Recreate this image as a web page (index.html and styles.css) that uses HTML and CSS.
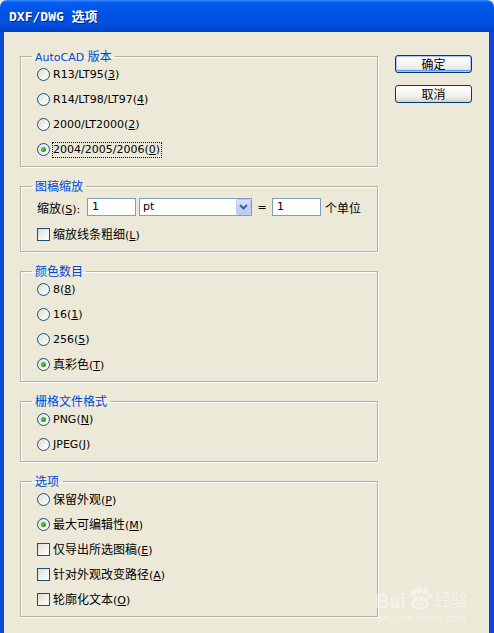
FILE: index.html
```html
<!DOCTYPE html>
<html lang="zh-CN">
<head>
<meta charset="utf-8">
<title>DXF/DWG 选项</title>
<link rel="stylesheet" href="styles.css">
</head>
<body>
<div class="window">
  <div class="titlebar"><span class="title">DXF/DWG 选项</span></div>
  <div class="frame">
    <div class="client">
      <div class="groups">
        <fieldset class="group">
          <legend>AutoCAD <span class="zh">版本</span></legend>
          <div class="row"><span class="radio"></span><span class="lbl">R13/LT95(<u>3</u>)</span></div>
          <div class="row"><span class="radio"></span><span class="lbl">R14/LT98/LT97(<u>4</u>)</span></div>
          <div class="row"><span class="radio"></span><span class="lbl">2000/LT2000(<u>2</u>)</span></div>
          <div class="row"><span class="radio on"></span><span class="lbl focus">2004/2005/2006(<u>0</u>)</span></div>
        </fieldset>
        <fieldset class="group scale">
          <legend class="zh">图稿缩放</legend>
          <div class="row tall">
            <span class="fieldlbl"><span class="zh">缩放</span>(<u>S</u>):</span>
            <span class="input w1">1</span>
            <span class="select"><span class="selval">pt</span><span class="dropbtn"><svg width="9" height="6" viewBox="0 0 9 6"><path d="M1 1 L4.5 4.5 L8 1" fill="none" stroke="#4D6185" stroke-width="2"/></svg></span></span>
            <span class="eq">=</span>
            <span class="input w2">1</span>
            <span class="unit zh">个单位</span>
          </div>
          <div class="row"><span class="check"></span><span class="lbl"><span class="zh">缩放线条粗细</span>(<u>L</u>)</span></div>
        </fieldset>
        <fieldset class="group">
          <legend class="zh">颜色数目</legend>
          <div class="row"><span class="radio"></span><span class="lbl">8(<u>8</u>)</span></div>
          <div class="row"><span class="radio"></span><span class="lbl">16(<u>1</u>)</span></div>
          <div class="row"><span class="radio"></span><span class="lbl">256(<u>5</u>)</span></div>
          <div class="row"><span class="radio on"></span><span class="lbl"><span class="zh">真彩色</span>(<u>T</u>)</span></div>
        </fieldset>
        <fieldset class="group">
          <legend class="zh">栅格文件格式</legend>
          <div class="row"><span class="radio on"></span><span class="lbl">PNG(<u>N</u>)</span></div>
          <div class="row"><span class="radio"></span><span class="lbl">JPEG(<u>J</u>)</span></div>
        </fieldset>
        <fieldset class="group">
          <legend class="zh">选项</legend>
          <div class="row"><span class="radio"></span><span class="lbl"><span class="zh">保留外观</span>(<u>P</u>)</span></div>
          <div class="row"><span class="radio on"></span><span class="lbl"><span class="zh">最大可编辑性</span>(<u>M</u>)</span></div>
          <div class="row"><span class="check"></span><span class="lbl"><span class="zh">仅导出所选图稿</span>(<u>E</u>)</span></div>
          <div class="row"><span class="check"></span><span class="lbl"><span class="zh">针对外观改变路径</span>(<u>A</u>)</span></div>
          <div class="row"><span class="check"></span><span class="lbl"><span class="zh">轮廓化文本</span>(<u>O</u>)</span></div>
        </fieldset>
      </div>
      <div class="buttons">
        <button class="btn default">确定</button>
        <button class="btn">取消</button>
      </div>
    </div>
  </div>
  <div class="watermark">
    <div class="wm-top">
      <span class="wm-bai">Bai</span>
      <svg class="wm-paw" width="28" height="24" viewBox="0 0 28 24">
        <ellipse cx="7" cy="6" rx="3" ry="3.5" fill="#fff"/>
        <ellipse cx="13" cy="3.5" rx="3" ry="3.5" fill="#fff"/>
        <ellipse cx="19.5" cy="4" rx="3" ry="3.5" fill="#fff"/>
        <ellipse cx="24" cy="9" rx="2.6" ry="3" fill="#fff"/>
        <ellipse cx="14" cy="16" rx="9" ry="7" fill="#fff"/>
        <text x="14" y="20" font-size="10" text-anchor="middle" fill="#ECE9D8" font-family="Liberation Sans, sans-serif" font-weight="bold">du</text>
      </svg>
      <span class="wm-jy">经验</span>
    </div>
    <div class="wm-url">jingyan.baidu.com</div>
  </div>
</div>
</body>
</html>
```
FILE: styles.css
```css
html, body {
  margin: 0;
  padding: 0;
  background: #ECE9D8;
}
.window {
  position: relative;
  width: 494px;
  height: 633px;
  display: flex;
  flex-direction: column;
  overflow: hidden;
  font-family: "DejaVu Sans", "Noto Sans CJK SC", sans-serif;
  font-size: 11px;
  color: #000;
}
.zh {
  font-family: "Noto Sans CJK SC", sans-serif;
  font-size: 12px;
}
.titlebar {
  height: 32px;
  flex: none;
  border-radius: 7px 7px 0 0;
  background: linear-gradient(#3B8FFF 0, #0A62F2 2px, #0058EE 6px, #0054E3 14px, #0050DF 24px, #0047D2 29px, #003CC0 32px);
  display: flex;
  align-items: center;
  padding-left: 9px;
  padding-bottom: 1px;
  box-sizing: border-box;
}
.title {
  color: #fff;
  font-family: "DejaVu Sans Mono", "Noto Sans CJK SC", monospace;
  font-weight: bold;
  font-size: 13px;
  text-shadow: 1px 1px 0 #0A1E8A;
}
.frame {
  flex: 1;
  border-left: 4px solid #0A4BDA;
  border-right: 5px solid #0A46D6;
  background: #ECE9D8;
}
.client {
  display: flex;
  align-items: flex-start;
  padding: 18px 0 0 16px;
}
.groups {
  width: 358px;
  display: flex;
  flex-direction: column;
  gap: 13px;
}
.group {
  margin: 0;
  padding: 0 0 4px 16px;
  border: 1px solid #B5B2A3;
  box-shadow: 1px 1px 0 #fff, inset 1px 1px 0 #fff;
  min-width: 0;
}
.group legend {
  color: #0046D5;
  height: 12px;
  line-height: 12px;
  padding: 0 3px;
  margin-left: -5px;
  overflow: visible;
}
.group legend .zh,
.group legend.zh {
  line-height: 12px;
}
.row {
  display: flex;
  align-items: center;
  height: 25px;
}
.row.tall {
  height: 30px;
}
.radio {
  width: 13px;
  height: 13px;
  box-sizing: border-box;
  border: 1px solid #1C5180;
  border-radius: 50%;
  background: linear-gradient(135deg, #DCDAD3 0%, #F4F3EE 60%, #fff 100%);
  margin-right: 3px;
  display: flex;
  align-items: center;
  justify-content: center;
  flex: none;
}
.radio.on::after {
  content: "";
  width: 5px;
  height: 5px;
  border-radius: 50%;
  background: radial-gradient(circle at 40% 35%, #5CD05C 0, #21A121 60%, #1A8A1A 100%);
}
.check {
  width: 13px;
  height: 13px;
  box-sizing: border-box;
  border: 1px solid #1C5180;
  background: linear-gradient(135deg, #DCDAD3 0%, #F4F3EE 60%, #fff 100%);
  margin-right: 3px;
  flex: none;
}
.lbl {
  line-height: 14px;
  padding: 0 1px 0 0;
}
.focus {
  outline: 1px dotted #000;
  outline-offset: 0;
}
u {
  text-decoration: underline;
  text-underline-offset: 1px;
}
.fieldlbl {
  width: 50px;
  flex: none;
}
.input {
  height: 18px;
  box-sizing: border-box;
  border: 1px solid #7F9DB9;
  background: #fff;
  padding-left: 4px;
  line-height: 16px;
  flex: none;
}
.input.w1 { width: 49px; }
.input.w2 { width: 49px; }
.select {
  margin-left: 3px;
  width: 113px;
  height: 18px;
  box-sizing: border-box;
  border: 1px solid #7F9DB9;
  background: #fff;
  display: flex;
  align-items: stretch;
  flex: none;
}
.selval {
  flex: 1;
  padding-left: 3px;
  line-height: 16px;
}
.dropbtn {
  width: 15px;
  border: 1px solid #B7CAF5;
  border-radius: 2px;
  box-sizing: border-box;
  background: linear-gradient(#D6E2FD, #B4C9F8);
  display: flex;
  align-items: center;
  justify-content: center;
}
.eq {
  width: 20px;
  text-align: center;
  flex: none;
}
.unit {
  margin-left: 4px;
}
.buttons {
  margin-left: 17px;
  margin-top: 5px;
  display: flex;
  flex-direction: column;
  gap: 12px;
}
.btn {
  width: 77px;
  height: 18px;
  box-sizing: border-box;
  border: 1px solid #003C74;
  border-radius: 3px;
  background: linear-gradient(#FFFFFF 0%, #F7F7F4 40%, #ECEBE6 75%, #D6D0C5 100%);
  font-family: "Noto Sans CJK SC", sans-serif;
  font-size: 12px;
  line-height: 14px;
  padding: 0;
  color: #000;
}
.btn.default {
  box-shadow: inset 0 0 0 1px #A8C4F4, inset 0 -1px 0 1px #6F97E7;
}
.watermark {
  position: absolute;
  left: 375px;
  top: 587px;
  opacity: 0.45;
  color: #fff;
  font-family: "Liberation Sans", "Noto Sans CJK SC", sans-serif;
}
.wm-top {
  display: flex;
  align-items: flex-end;
}
.wm-bai {
  font-size: 20px;
  font-weight: bold;
  line-height: 20px;
}
.wm-jy {
  font-size: 17px;
  line-height: 20px;
}
.wm-url {
  font-size: 11px;
  margin-left: 3px;
  margin-top: 1px;
}
```
